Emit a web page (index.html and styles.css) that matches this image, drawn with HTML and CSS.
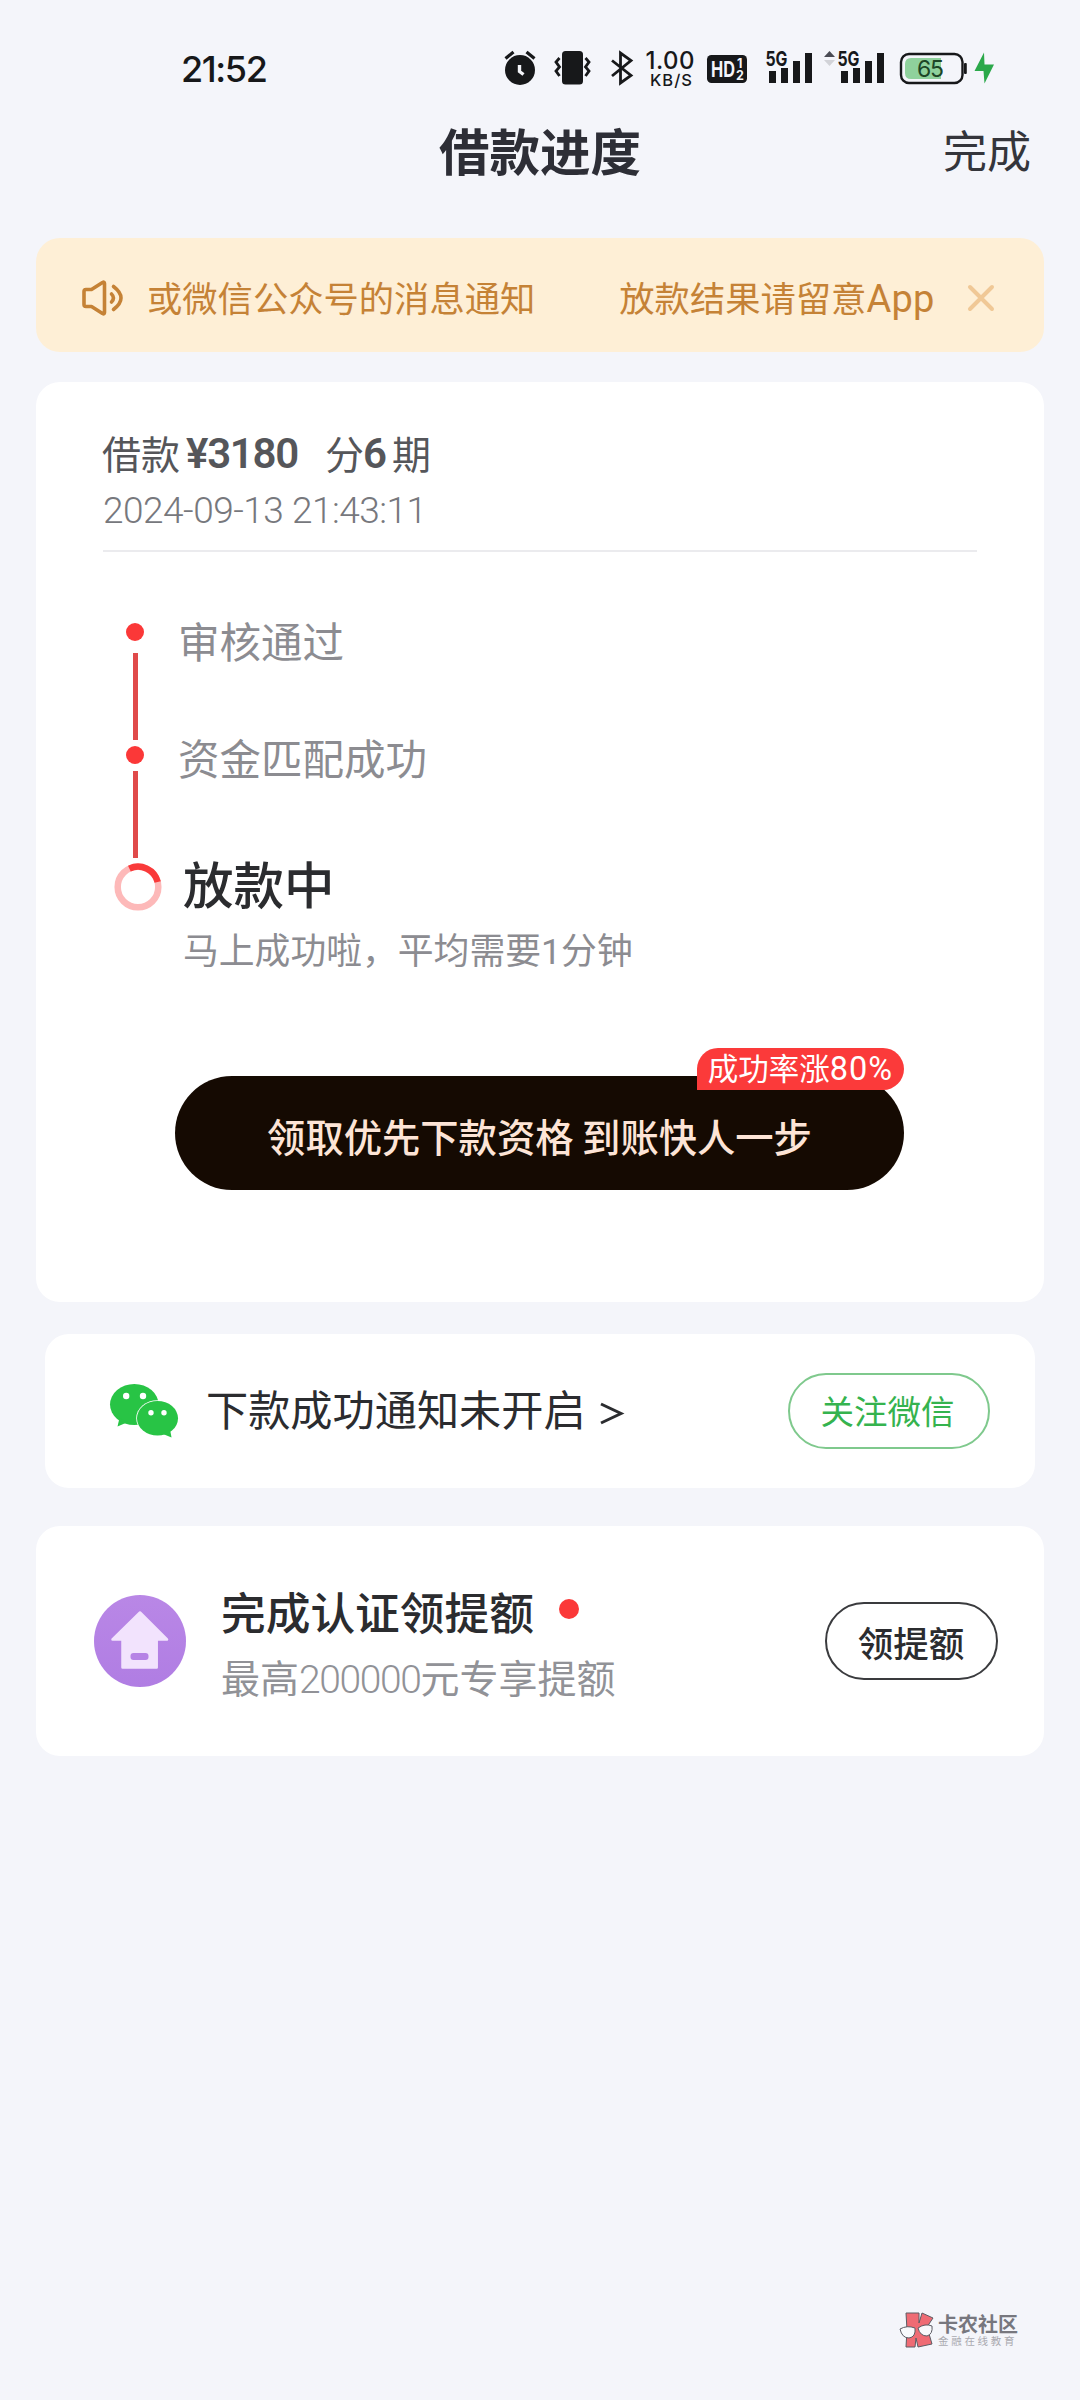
FILE: index.html
```html
<!DOCTYPE html>
<html lang="zh-CN">
<head>
<meta charset="utf-8">
<title>借款进度</title>
<link rel="stylesheet" href="styles.css">
</head>
<body>
<div class="status">
  <span class="clock">21:52</span>
  <svg class="status-icons" width="500" height="44" viewBox="500 46 500 44">
    <g fill="#17181a">
      <circle cx="520" cy="70" r="15"/>
      <path d="M505.500 58.500l8-6.500M534.500 58.500l-8-6.500" stroke="#17181a" stroke-width="3.200" fill="none"/>
      <path d="M519.500 65v6.500l4 3" stroke="#f4f5fa" stroke-width="3.400" fill="none"/>
      <rect x="562" y="51" width="21" height="33.500" rx="3.500"/>
      <path d="M559.500 58l-3.500 4 3.500 5-3.500 4 3.500 5M585.500 58l3.500 4-3.500 5 3.500 4-3.500 5" stroke="#17181a" stroke-width="2.800" fill="none"/>
      <path d="M612 60.500l19 15-10.500 7.500V53l10.500 7.500-19 15.500" stroke="#17181a" stroke-width="2.800" fill="none"/>
      <rect x="707" y="55" width="40" height="28" rx="4.500"/>
      <path d="M769 71h7v12h-7zM781 68h7v15h-7zM793 61h7v22h-7zM805 53h7v30h-7zM841 71h7v12h-7zM853 68h7v15h-7zM865 61h7v22h-7zM877 53h7v30h-7z"/>
      <path d="M824 57l5.500-6 5.500 6z" fill="#4b4c55"/>
      <path d="M824 60l5.500 6 5.500-6z" fill="#d2d3d8"/>
      <text x="645.500" y="69" font-size="24" font-weight="500" textLength="49">1.00</text>
      <text x="650" y="85.500" font-size="16.500" font-weight="500" textLength="42">KB/S</text>
      <text x="765.500" y="66" font-size="20.500" font-weight="700" textLength="22" lengthAdjust="spacingAndGlyphs">5G</text>
      <text x="837.500" y="66" font-size="20.500" font-weight="700" textLength="22" lengthAdjust="spacingAndGlyphs">5G</text>
    </g>
    <g fill="#f4f5fa" font-weight="700">
      <text x="711" y="77" font-size="22" textLength="24" lengthAdjust="spacingAndGlyphs">HD</text>
      <text x="737" y="67.500" font-size="12.500">1</text>
      <text x="736" y="80" font-size="12.500">2</text>
    </g>
    <rect x="901" y="54" width="61.500" height="29" rx="8" fill="none" stroke="#17181a" stroke-width="2.400"/>
    <path d="M911 58h30v21h-30q-6 0-6-6v-9q0-6 6-6z" fill="#8fd19c"/>
    <rect x="964" y="63" width="2.800" height="11" rx="1" fill="#17181a"/>
    <text x="917" y="77" font-size="23" fill="#1d4526" textLength="27">65</text>
    <path d="M984 52.500L974.500 71H983.500L984.500 83.500 994 64.500H984.500z" fill="#2ba84a"/>
  </svg>
</div>

<header class="nav">
  <h1>借款进度</h1>
  <span class="done">完成</span>
</header>

<main>
  <section class="notice">
    <svg width="44" height="36" viewBox="0 0 44 36" fill="none" stroke="#c58236" stroke-width="3.600" stroke-linejoin="round" stroke-linecap="round">
      <path d="M4 9.500h5.500L20.500 2.500q2-1 2 1v29q0 2-2 1L9.500 26.500H4q-2 0-2-2v-13q0-2 2-2z"/>
      <path d="M29.500 14q4 4 0 8M31.500 6.500q15 11.500 0 23"/>
    </svg>
    <div class="marquee"><span>或微信公众号的消息通知</span><span>放款结果请留意<b class="latin">App</b></span></div>
    <svg class="close" width="28" height="28" viewBox="0 0 28 28" fill="none" stroke="#f0c896" stroke-width="4" stroke-linecap="round"><path d="M3 3l22 22M25 3L3 25"/></svg>
  </section>

  <section class="card progress">
    <div class="loan"><span>借款</span><b class="amount">¥3180</b><span>分</span><b class="term">6</b><span>期</span></div>
    <div class="date">2024-09-13 21:43:11</div>
    <ol class="steps">
      <li class="step first"><div class="rail"><i class="dot"></i><i class="line"></i></div><p>审核通过</p></li>
      <li class="step second"><div class="rail"><i class="dot"></i><i class="line"></i></div><p>资金匹配成功</p></li>
      <li class="step current">
        <svg width="48" height="48" viewBox="0 0 48 48" fill="none" stroke-width="6.500">
          <circle cx="24" cy="24" r="20.300" stroke="#fdb9b9"/>
          <path d="M15.400 5.600A20.300 20.300 0 0 1 43.700 19" stroke="#f93a3a"/>
        </svg>
        <div><h2>放款中</h2><p>马上成功啦，平均需要<span class="latin">1</span>分钟</p></div>
      </li>
    </ol>
    <div class="cta">领取优先下款资格 到账快人一步<span class="badge">成功率涨<span class="latin">80%</span></span></div>
  </section>

  <section class="card wechat">
    <svg width="68" height="54" viewBox="0 0 68 54" fill="#28c445">
      <ellipse cx="24.300" cy="20.500" rx="24.300" ry="20.500"/>
      <path d="M9.500 34L7.500 42.500 18 38z"/>
      <ellipse cx="47.500" cy="34.300" rx="21.300" ry="18.100" fill="#fff"/>
      <ellipse cx="47.500" cy="34.300" rx="20.500" ry="17.300"/>
      <path d="M53 50l8.500 3.500-1.500-8z"/>
      <g fill="#fff"><circle cx="16.200" cy="12" r="3.200"/><circle cx="33" cy="12" r="3.200"/><circle cx="41" cy="28.700" r="2.700"/><circle cx="54" cy="28.700" r="2.700"/></g>
    </svg>
    <span class="wechat-text">下款成功通知未开启</span>
    <svg class="arrow" width="24" height="26" viewBox="0 0 24 26" fill="none" stroke="#2b2c2f" stroke-width="3"><path d="M1 3l20 9.500L1 22"/></svg>
    <span class="pill green">关注微信</span>
  </section>

  <section class="card quota">
    <svg width="92" height="92" viewBox="0 0 92 92">
      <defs><linearGradient id="violet" x1="0" y1="0" x2="0" y2="1"><stop offset="0" stop-color="#b987e6"/><stop offset="1" stop-color="#b07de3"/></linearGradient></defs>
      <circle cx="46" cy="46" r="46" fill="url(#violet)"/>
      <path d="M46 17.500L73 44.500H62.700V72.500H28.500V44.500H18.500z" fill="#f2e3fd" stroke="#f2e3fd" stroke-width="2.500" stroke-linejoin="round"/>
      <rect x="36.500" y="58" width="18" height="7" rx="3" fill="#b683e5"/>
    </svg>
    <div class="quota-text">
      <h3>完成认证领提额<i class="new"></i></h3>
      <p>最高<span class="latin">200000</span>元专享提额</p>
    </div>
    <span class="pill dark">领提额</span>
  </section>
</main>

<footer class="mark">
  <svg width="36" height="36" viewBox="0 0 36 36">
    <path d="M7 1h13v10l3-10 11 5-6 9 5 17-14 3-2-9-1 9H7l1-17z" fill="#ef6b74" stroke="#5c5c64" stroke-width="1"/>
    <g fill="#f8f9fc" stroke="#5c5c64" stroke-width="1"><path d="M1 17q7-4 15-1 1 9-6 10-7 0-9-9zM19 16q7-5 14-2 1 8-5 10-7 0-9-8z"/></g>
  </svg>
  <div><strong>卡农社区</strong><small>金融在线教育</small></div>
</footer>
</body>
</html>
```
FILE: styles.css
```css
* { box-sizing: border-box; }
body, h1, h2, h3, p, ol { margin: 0; padding: 0; }
body {
  width: 1080px;
  height: 2400px;
  background: #f4f5fa;
  color: #2b2c2f;
  font-family: "Noto Sans CJK SC", sans-serif;
  display: flex;
  flex-direction: column;
}
svg { display: block; flex: none; overflow: visible; }
i { display: block; }
.latin { font-family: Roboto, sans-serif; font-weight: inherit; }

.status {
  height: 112px;
  padding: 46px 80px 0 181px;
  display: flex;
  justify-content: space-between;
}
.clock { font: 500 36px/47px Inter, sans-serif; letter-spacing: -1.4px; color: #17181a; }
.status-icons { font-family: Inter, sans-serif; }

.nav {
  height: 126px;
  padding-right: 49px;
  display: grid;
  grid-template-columns: 1fr auto 1fr;
  margin-left: 49px;
}
.nav h1 { grid-column: 2; font-size: 50.500px; line-height: 75px; font-weight: 700; color: #2d2e36; }
.done { justify-self: end; font-size: 44px; line-height: 74px; color: #34353b; }

main { flex: 1; padding: 0 36px; }
.notice {
  height: 114px;
  border-radius: 24px;
  background: #feefd6;
  color: #c58236;
  display: flex;
  align-items: center;
  padding: 5px 49px 0 46px;
}
.marquee { width: 788px; margin-left: 21px; display: flex; gap: 84px; font-size: 35.300px; line-height: 50px; white-space: nowrap; overflow: hidden; }
.marquee .latin { font-size: 38px; letter-spacing: .3px; }
.close { margin-left: auto; }

.card { background: #fff; border-radius: 24px; }
.progress { height: 920px; margin-top: 30px; padding: 44px 67px 0; }
.loan { display: flex; align-items: center; height: 52px; margin-left: -1px; font-size: 39px; line-height: 50px; color: #55565a; }
.loan b { font-family: Roboto, sans-serif; font-weight: 600; font-size: 42px; line-height: 50px; padding-top: 3px; }
.amount { margin: 0 27px 0 6px; letter-spacing: -1.300px; }
.term { margin: 0 6px 0 -1px; letter-spacing: -1px; }
.date {
  height: 74px;
  border-bottom: 2px solid #ebebee;
  padding-top: 7px;
  font: 300 37px/52px Roboto, sans-serif;
  letter-spacing: -.5px;
  color: #77787d;
}
.steps { list-style: none; padding: 71px 0 0 11px; }
.step { display: flex; }
.first { height: 123px; }
.second { height: 117px; }
.rail { width: 42px; display: flex; flex-direction: column; align-items: center; }
.dot { width: 18px; height: 18px; border-radius: 50%; background: #fb3838; }
.line { width: 5px; height: 87px; margin-top: 12px; background: #e04a4a; }
.second .line { margin-top: 7px; }
.step > p { margin: -4px 0 0 22px; font-size: 41.500px; line-height: 42px; color: #8c8c91; }
.second > p { margin-top: -10px; }
.current > div { padding-left: 21px; }
.current h2 { font-size: 50.500px; line-height: 50px; margin-top: -6px; font-weight: 500; color: #2b2c2f; }
.current p { font-size: 35.800px; line-height: 50px; margin-top: 16px; color: #8c8c91; }
.cta {
  position: relative;
  width: 729px;
  height: 114px;
  margin: 99px 0 0 72px;
  border-radius: 57px;
  background: #150a02;
  color: #fde4d6;
  font-size: 38.300px;
  font-weight: 500;
  line-height: 119px;
  text-align: center;
}
.badge {
  position: absolute;
  right: 0;
  top: -28px;
  width: 207px;
  height: 42px;
  border-radius: 21px 21px 21px 0;
  background: #fb3a3a;
  color: #fff;
  font-size: 30.500px;
  font-weight: 400;
  line-height: 38px;
  white-space: nowrap;
}
.badge .latin { font-size: 32.500px; letter-spacing: 1px; }

.wechat { height: 154px; margin: 32px 9px 0; padding: 0 45px 0 65px; display: flex; align-items: center; }
.wechat-text { margin-left: 28px; font-size: 42.200px; line-height: 60px; margin-top: -6px; }
.arrow { margin: 6px 0 0 14px; }
.pill { margin-left: auto; border-radius: 40px; text-align: center; }
.green { width: 202px; height: 76px; border: 2px solid #7fc98d; color: #35b34e; font-size: 33.500px; line-height: 70px; padding-right: 3px; }
.dark { width: 173px; height: 78px; border: 2px solid #3a3b3e; font-size: 35.500px; line-height: 76px; font-weight: 500; padding-right: 1px; }

.quota { height: 230px; margin-top: 38px; padding: 0 46px 0 58px; display: flex; align-items: center; }
.quota-text { margin-left: 35px; padding-top: 6px; }
.quota h3 { display: flex; align-items: center; font-size: 44.700px; line-height: 60px; font-weight: 500; }
.new { width: 20px; height: 20px; margin: -4px 0 0 25px; border-radius: 50%; background: #fb3838; }
.quota p { font-size: 39px; line-height: 56px; margin-top: 7px; color: #919297; }
.quota .latin { font-weight: 300; letter-spacing: -1.400px; }

.mark { display: flex; align-items: center; justify-content: flex-end; gap: 3px; height: 140px; padding: 0 62px 0 0; }
.mark strong, .mark small { display: block; white-space: nowrap; }
.mark strong { font-size: 20px; line-height: 21px; font-weight: 700; color: #77777e; }
.mark small { font-size: 10.500px; line-height: 14px; letter-spacing: 2.700px; margin-right: -3px; color: #aaaab0; }
```
